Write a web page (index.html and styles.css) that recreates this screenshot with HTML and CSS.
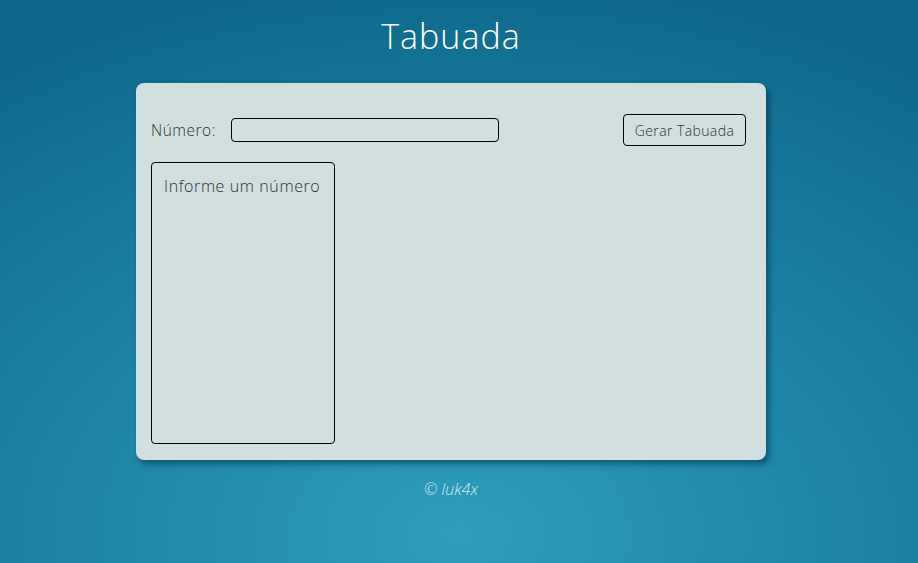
FILE: index.html
```html
<!DOCTYPE html>
<html lang="pt-BR">
<head>
<meta charset="utf-8">
<title>Tabuada</title>
<link rel="stylesheet" href="styles.css">
</head>
<body>
<header class="header">
  <h1 class="title">Tabuada</h1>
</header>
<main class="card">
  <div class="controls">
    <label class="label" for="num">Número:</label>
    <input class="input" id="num" type="number">
    <button class="btn" type="button">Gerar Tabuada</button>
  </div>
  <div class="result">Informe um número</div>
</main>
<footer class="footer">© luk4x</footer>
</body>
</html>
```

FILE: styles.css
```css
* { box-sizing: border-box; }
html, body { height: 100%; }
body {
  margin: 0;
  padding-right: 16px;
  min-height: 563px;
  font-family: "Open Sans", "Liberation Sans", sans-serif;
  font-weight: 300;
  background: radial-gradient(ellipse 90% 100% at 50% 95%, #2d9ebc 0%, #1e87a8 45%, #0e688c 100%);
  display: flex;
  flex-direction: column;
  align-items: center;
}
.header { padding-top: 12px; height: 83px; }
.title {
  margin: 0;
  font-size: 34px;
  font-weight: 300;
  letter-spacing: 1px;
  color: #ffffff;
  line-height: 48px;
}
.card {
  width: 630px;
  height: 377px;
  background: #d1dfdf;
  border-radius: 8px;
  box-shadow: 3px 4px 6px rgba(0, 40, 60, 0.55);
  padding: 31px 20px 16px 15px;
  display: flex;
  flex-direction: column;
}
.controls {
  display: flex;
  align-items: center;
  height: 32px;
}
.label {
  font-size: 15.5px;
  letter-spacing: 0.5px;
  color: #2e2e2e;
  width: 80px;
}
.input {
  width: 268px;
  height: 24px;
  border: 1px solid #000;
  border-radius: 4px;
  background: transparent;
  font: inherit;
}
.btn {
  margin-left: auto;
  width: 123px;
  height: 32px;
  border: 1px solid #000;
  border-radius: 4px;
  background: transparent;
  font-family: inherit;
  font-weight: 300;
  font-size: 14px;
  letter-spacing: 0.4px;
  color: #2e2e2e;
  padding: 0;
}
.result {
  margin-top: 16px;
  width: 184px;
  flex: 1;
  border: 1px solid #000;
  border-radius: 4px;
  padding: 11px 0 0 12px;
  font-size: 16px;
  letter-spacing: 0.6px;
  color: #2e2e2e;
  line-height: 24px;
}
.footer {
  margin-top: 18px;
  font-style: italic;
  font-size: 16px;
  color: #d6ecf2;
}
```
